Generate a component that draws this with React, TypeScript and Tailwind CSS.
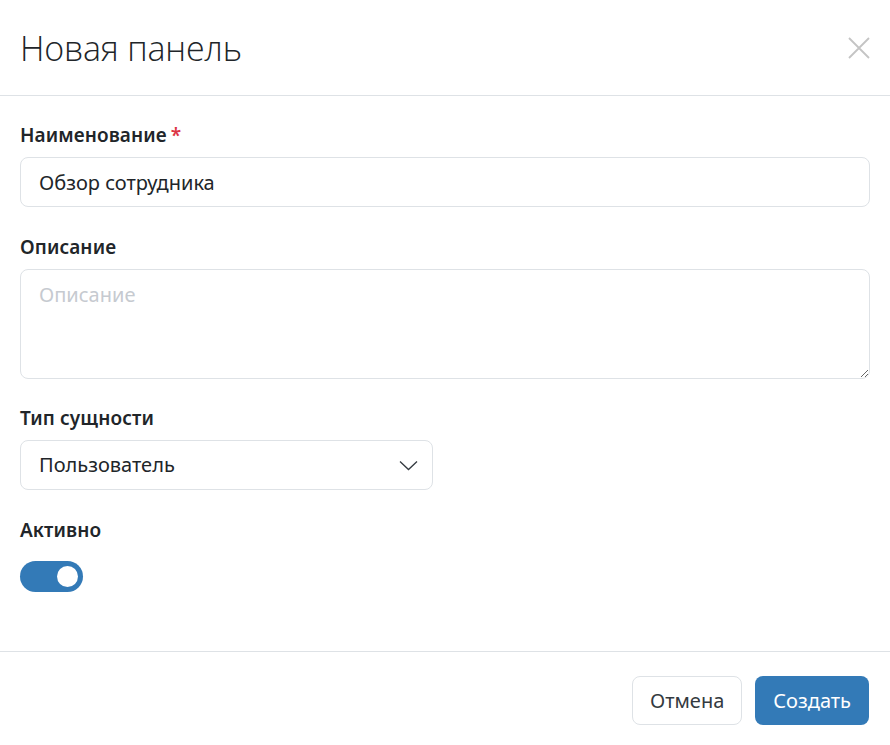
import { useState } from "react";

const FONT = { fontFamily: '"Noto Sans", "Open Sans", sans-serif' };

function Label({ children, required }: { children: string; required?: boolean }) {
  return (
    <label className="block mb-[8px] text-[19px] leading-[27px] font-semibold tracking-[0.1px] text-[#212529]">
      {children}
      {required && <span className="ml-[4px] text-[#dc3545]">*</span>}
    </label>
  );
}

export default function App() {
  const [active, setActive] = useState(true);

  return (
    <div className="w-[890px] h-[745px] bg-white flex flex-col text-[#212529]" style={FONT}>
      <header className="h-[96px] shrink-0 flex items-center justify-between pl-[20px] pr-[18px] border-b border-[#dee2e6]">
        <h1 className="text-[34px] font-light leading-none tracking-[-0.2px] text-[#212529]" style={{ fontFamily: '"Open Sans", "Noto Sans", sans-serif' }}>
          Новая панель
        </h1>
        <button className="w-[26px] h-[26px] flex items-center justify-center text-[#c4c4c4]">
          <svg width="22" height="22" viewBox="0 0 22 22" fill="none" stroke="currentColor" strokeWidth="1.8">
            <path d="M1 1L21 21M21 1L1 21" />
          </svg>
        </button>
      </header>

      <main className="flex-1 px-[20px] pt-[26px]">
        <div className="mb-[27px]">
          <Label required>Наименование</Label>
          <input
            defaultValue="Обзор сотрудника"
            className="w-full h-[50px] px-[18px] text-[20px] rounded-[8px] border border-[#dee2e6] outline-none"
          />
        </div>

        <div className="mb-[26px]">
          <Label>Описание</Label>
          <textarea
            placeholder="Описание"
            className="block w-full h-[110px] px-[18px] py-[10px] text-[20px] rounded-[8px] border border-[#dee2e6] outline-none placeholder:text-[#c6cad0]"
          />
        </div>

        <div className="mb-[27px]">
          <Label>Тип сущности</Label>
          <div className="w-[413px] h-[50px] flex items-center justify-between pl-[18px] pr-[14px] rounded-[8px] border border-[#dee2e6]">
            <span className="text-[20px]">Пользователь</span>
            <svg width="19" height="11" viewBox="0 0 19 11" fill="none" stroke="#343a40" strokeWidth="1.3">
              <path d="M1 1.5L9.5 9.5L18 1.5" />
            </svg>
          </div>
        </div>

        <div>
          <Label>Активно</Label>
          <button
            onClick={() => setActive(!active)}
            className={`relative mt-[9px] w-[63px] h-[31px] rounded-full ${active ? "bg-[#337ab7]" : "bg-[#dee2e6]"}`}
          >
            <span
              className={`absolute top-[5px] w-[21px] h-[21px] rounded-full bg-white ${active ? "left-[37px]" : "left-[5px]"}`}
            />
          </button>
        </div>
      </main>

      <footer className="h-[94px] shrink-0 flex items-center justify-end gap-[13px] pt-[4px] pr-[21px] border-t border-[#dee2e6]">
        <button className="h-[49px] px-[17px] text-[20px] rounded-[8px] border border-[#dee2e6] bg-white text-[#343a40]">
          Отмена
        </button>
        <button className="h-[49px] px-[18px] text-[20px] rounded-[8px] bg-[#337ab7] text-white">
          Создать
        </button>
      </footer>
    </div>
  );
}
